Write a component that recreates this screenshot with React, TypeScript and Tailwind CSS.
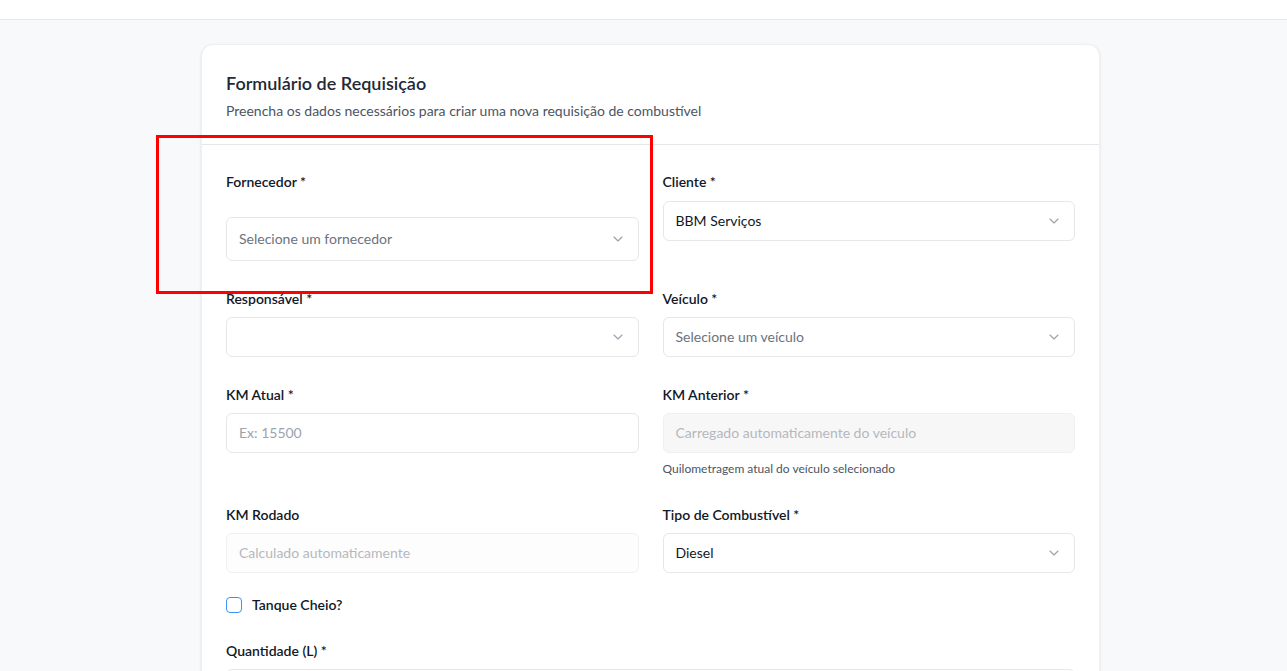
import { ChevronDown } from "lucide-react";

const font = { fontFamily: 'Lato, "Liberation Sans", sans-serif' };

function Label({ children }: { children: React.ReactNode }) {
  return <label className="block text-sm leading-5 font-semibold text-[#111827]">{children}</label>;
}

function Select({ value, placeholder, tall }: { value?: string; placeholder?: string; tall?: boolean }) {
  return (
    <div
      className={`flex items-center justify-between rounded-md border border-[#e5e7eb] bg-white px-3 ${
        tall ? "h-[44px]" : "h-10"
      }`}
    >
      {value ? (
        <span className="text-sm text-[#111827]">{value}</span>
      ) : (
        <span className="text-sm text-[#6b7280]">{placeholder ?? ""}</span>
      )}
      <ChevronDown className="h-4 w-4 text-[#9ca3af]" strokeWidth={1.75} />
    </div>
  );
}

function Input({ placeholder, variant }: { placeholder?: string; variant?: "disabled" | "soft" }) {
  const box =
    variant === "disabled"
      ? "border-[#f0f0f0] bg-[#f7f7f7]"
      : variant === "soft"
      ? "border-[#f0f1f3] bg-[#fdfdfd]"
      : "border-[#e5e7eb] bg-white";
  const text = variant ? "text-[#b5b8bd]" : "text-[#9ca3af]";
  return (
    <div className={`flex h-10 items-center rounded-md border px-3 ${box}`}>
      {placeholder && <span className={`text-sm ${text}`}>{placeholder}</span>}
    </div>
  );
}

export default function App() {
  return (
    <div className="relative h-[671px] overflow-hidden bg-[#f8f9fb]" style={font}>
      <header className="h-5 border-b border-[#e5e7eb] bg-white" />

      <main className="pl-[201px] pt-6">
        <div className="w-[899px] rounded-xl border border-[#eef0f3] bg-white shadow-sm">
          <div className="border-b border-[#e5e7eb] px-6 pb-[23px] pt-6">
            <h2 className="text-lg leading-7 font-semibold text-[#1f2937]">Formulário de Requisição</h2>
            <p className="mt-1 text-sm leading-5 text-[#4b5563]">
              Preencha os dados necessários para criar uma nova requisição de combustível
            </p>
          </div>

          <div className="px-6 pt-[27px] pb-6">
            <div className="grid grid-cols-2 gap-x-6 gap-y-7">
              <div>
                <Label>Fornecedor *</Label>
                <div className="mt-[25px]">
                  <Select placeholder="Selecione um fornecedor" tall />
                </div>
              </div>
              <div>
                <Label>Cliente *</Label>
                <div className="mt-[9px]">
                  <Select value="BBM Serviços" />
                </div>
              </div>

              <div>
                <Label>Responsável *</Label>
                <div className="mt-2">
                  <Select />
                </div>
              </div>
              <div>
                <Label>Veículo *</Label>
                <div className="mt-2">
                  <Select placeholder="Selecione um veículo" />
                </div>
              </div>

              <div>
                <Label>KM Atual *</Label>
                <div className="mt-2">
                  <Input placeholder="Ex: 15500" />
                </div>
              </div>
              <div>
                <Label>KM Anterior *</Label>
                <div className="mt-2">
                  <Input placeholder="Carregado automaticamente do veículo" variant="disabled" />
                </div>
                <p className="mt-2 text-xs leading-4 text-[#4b5563]">Quilometragem atual do veículo selecionado</p>
              </div>

              <div>
                <Label>KM Rodado</Label>
                <div className="mt-2">
                  <Input placeholder="Calculado automaticamente" variant="soft" />
                </div>
              </div>
              <div>
                <Label>Tipo de Combustível *</Label>
                <div className="mt-2">
                  <Select value="Diesel" />
                </div>
              </div>
            </div>

            <div className="mt-6 flex items-center gap-2.5">
              <span className="h-4 w-4 rounded border border-[#3b93f0] bg-white" />
              <span className="text-sm leading-4 font-semibold text-[#111827]">Tanque Cheio?</span>
            </div>

            <div className="mt-7">
              <Label>Quantidade (L) *</Label>
              <div className="mt-2">
                <Input />
              </div>
            </div>
          </div>
        </div>
      </main>

      <div className="pointer-events-none absolute left-[156px] top-[135px] h-[159px] w-[497px] border-[3px] border-[#ff0000]" />
    </div>
  );
}
